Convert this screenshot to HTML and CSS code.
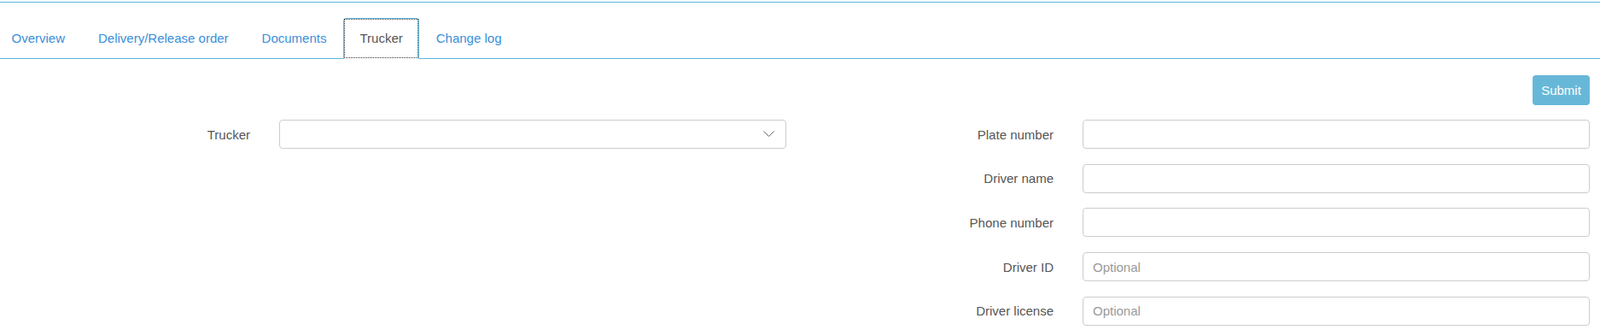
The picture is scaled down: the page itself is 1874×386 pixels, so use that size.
FILE: index.html
```html
<!DOCTYPE html>
<html>
<head>
    <title>Trucker</title>
    <link rel="stylesheet" href="styles.css">
</head>
<body>
    <div class="header-line"></div>

    <ul class="tabs">
        <li class="tab"><a href="#">Overview</a></li>
        <li class="tab"><a href="#">Delivery/Release order</a></li>
        <li class="tab"><a href="#">Documents</a></li>
        <li class="tab active"><a href="#">Trucker</a></li>
        <li class="tab"><a href="#">Change log</a></li>
    </ul>

    <div class="content">
        <div class="actions">
            <button class="btn-submit">Submit</button>
        </div>

        <div class="form-grid">
            <div class="form-col">
                <div class="form-row">
                    <label>Trucker</label>
                    <div class="select-box">
                        <select>
                            <option></option>
                        </select>
                        <svg class="chevron" width="13" height="7" viewBox="0 0 13 7">
                            <path d="M0.5 0.5 L6.5 6.5 L12.5 0.5" fill="none" stroke="#666" stroke-width="1"/>
                        </svg>
                    </div>
                </div>
            </div>

            <div class="form-col">
                <div class="form-row">
                    <label>Plate number</label>
                    <input type="text">
                </div>
                <div class="form-row">
                    <label>Driver name</label>
                    <input type="text">
                </div>
                <div class="form-row">
                    <label>Phone number</label>
                    <input type="text">
                </div>
                <div class="form-row">
                    <label>Driver ID</label>
                    <input type="text" placeholder="Optional">
                </div>
                <div class="form-row">
                    <label>Driver license</label>
                    <input type="text" placeholder="Optional">
                </div>
            </div>
        </div>
    </div>
</body>
</html>
```

FILE: styles.css
```css
* {
    box-sizing: border-box;
    font-family: 'Liberation Sans', Arial, sans-serif;
}

body {
    margin: 0;
    background: #fff;
    font-size: 15px;
    color: #555;
}

.header-line {
    margin-top: 2px;
    border-top: 1px solid #5bb8de;
}

/* tabs */
.tabs {
    list-style: none;
    margin: 0;
    padding: 18px 0 0 0;
    display: flex;
    border-bottom: 1px solid #5bb8de;
}

.tab {
    height: 48px;
    margin-bottom: -1px;
    border: 1px solid transparent;
    border-radius: 4px 4px 0 0;
}

.tab a {
    display: block;
    padding: 13px 18.5px 0 18.5px;
    line-height: 20px;
    height: 100%;
    color: #3b8fd8;
    text-decoration: none;
}

.tab:first-child a {
    padding-left: 12.5px;
}

.tab.active {
    background: #fff;
    border-color: #5bb8de;
    border-bottom-color: #fff;
}

.tab.active a {
    color: #555;
    outline: 1px dotted #333;
    outline-offset: -1px;
}

/* form */
.content {
    padding: 19px 12px 0 0;
}

.actions {
    display: flex;
    justify-content: flex-end;
    margin-bottom: 17px;
}

.btn-submit {
    height: 35px;
    width: 67px;
    padding: 0;
    background: #67b8d8;
    color: #fff;
    border: none;
    border-radius: 4px;
    font-size: 15px;
    cursor: pointer;
}

.form-grid {
    display: grid;
    grid-template-columns: 1fr 1fr;
    column-gap: 20px;
}

.form-col {
    display: flex;
    flex-direction: column;
    gap: 17.7px;
}

.form-row {
    display: grid;
    grid-template-columns: 293px 1fr;
    column-gap: 34px;
    align-items: center;
}

.form-row label {
    text-align: right;
    color: #555;
}

input, select {
    width: 100%;
    height: 34px;
    padding: 0 11px;
    border: 1px solid #ccc;
    border-radius: 4px;
    background: #fff;
    font-size: 15px;
    color: #555;
}

input::placeholder {
    color: #999;
}

select {
    appearance: none;
}

.select-box {
    position: relative;
}

.chevron {
    position: absolute;
    right: 14px;
    top: 13px;
    pointer-events: none;
}
```
